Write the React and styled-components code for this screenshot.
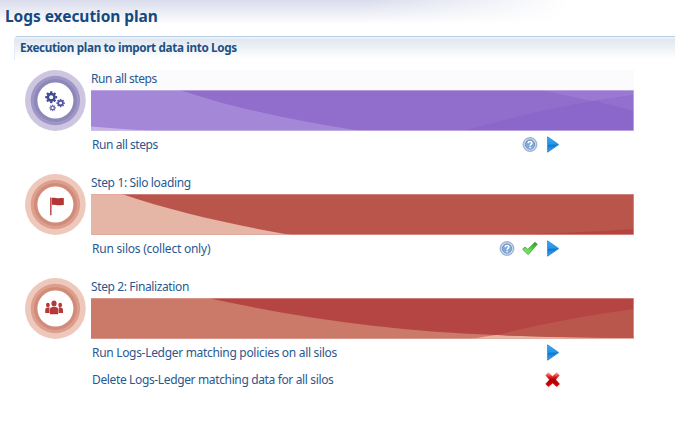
import React from 'react';
import styled, { createGlobalStyle } from 'styled-components';

const Global = createGlobalStyle`
  * { box-sizing: border-box; }
  body { margin: 0; background: #fff; overflow: hidden; }
`;

const Page = styled.main`
  width: 675px;
  height: 428px;
  overflow: hidden;
  color: #2a588f;
  font-family: "Noto Sans", "Open Sans", sans-serif;
  font-size: 12px;
  white-space: nowrap;
  background: #fff;
`;

const Header = styled.header`
  height: 36px;
  padding-left: 5px;
  background:
    linear-gradient(to bottom, rgba(255, 255, 255, 0), #fff 24px),
    linear-gradient(to right, #d9dcec 0, #d9dcec 365px, #fff 568px);
`;

const Title = styled.h1`
  margin: 0;
  font-size: 15.5px;
  line-height: 32px;
  font-weight: 700;
  letter-spacing: ${(p) => p.$spacing}px;
  color: #164981;
`;

const Panel = styled.section`
  margin-left: 14px;
`;

const PanelHeading = styled.h2`
  margin: 0;
  height: 24px;
  padding-left: 5px;
  border-top: 1px solid #b9cfe4;
  border-left: 1px solid #e3ecf4;
  border-top-left-radius: 4px;
  background: linear-gradient(to bottom, #ebf1f7 0, #ebf1f7 2px, #dfe7f0 2px, #fff 22px);
  font-size: 11.7px;
  line-height: 21px;
  font-weight: 700;
  letter-spacing: ${(p) => p.$spacing}px;
  color: #1e5085;
`;

const Steps = styled.div`
  display: flex;
  flex-direction: column;
  gap: 12px;
  padding: 10px 0 0 11px;
`;

const Step = styled.article`
  display: grid;
  grid-template-columns: 61px 543px;
  column-gap: 5px;
  min-height: 92px;
`;

const StepLabel = styled.div`
  height: 20px;
  line-height: 18px;
  background: ${(p) => (p.$tinted ? '#fbfbfd' : 'transparent')};
`;

const BannerArt = styled.svg`
  display: block;
  width: 543px;
  height: 41px;
`;

const Badge = styled.svg`
  display: block;
  width: 61px;
  height: 61px;
`;

const ActionRow = styled.div`
  display: flex;
  align-items: center;
  height: 27px;
  padding-left: 1px;
  padding-right: 69px;
`;

const Label = styled.span`
  letter-spacing: ${(p) => p.$spacing || 0}px;
`;

const ActionLabel = styled(Label)`
  padding-bottom: 1px;
`;

const Actions = styled.div`
  display: flex;
  margin-left: auto;
`;

const IconButton = styled.button`
  display: flex;
  align-items: center;
  justify-content: center;
  width: 23px;
  height: 23px;
  padding: 0;
  border: 0;
  background: none;
`;

const Glyph = styled.svg`
  display: block;
  width: 17px;
  height: 17px;
`;

function HelpIcon() {
  return (
    <Glyph viewBox="0 0 17 17">
      <defs>
        <linearGradient id="help" x1="0" y1="0" x2="0" y2="1">
          <stop offset="0" stopColor="#7f9ccb" />
          <stop offset="1" stopColor="#7fb2df" />
        </linearGradient>
      </defs>
      <circle cx="8" cy="8.5" r="7" fill="#a9bddb" stroke="#91aad0" strokeWidth=".8" />
      <circle cx="8" cy="8.5" r="5.9" fill="#d3e0ef" />
      <circle cx="8" cy="8.5" r="4.7" fill="url(#help)" stroke="#6c8fc2" strokeWidth=".8" />
      <path d="M6.2 7.2C6.2 4.9 10 5 9.9 7.1C9.8 8.4 8.1 8.4 8.1 9.8M8.1 10.8v1.4" fill="none" stroke="#fff" strokeWidth="1.5" />
    </Glyph>
  );
}

function PlayIcon() {
  return (
    <Glyph viewBox="0 0 17 17">
      <defs>
        <linearGradient id="play" x1="0" y1="0" x2="0" y2="1">
          <stop offset="0" stopColor="#43a8ee" />
          <stop offset=".48" stopColor="#1b98ef" />
          <stop offset=".55" stopColor="#1474cd" />
          <stop offset="1" stopColor="#42adf1" />
        </linearGradient>
      </defs>
      <path d="M2.6 .8L13.7 8.6L2.6 16.2Z" fill="url(#play)" stroke="#3788cf" strokeWidth=".9" strokeLinejoin="round" />
    </Glyph>
  );
}

function CheckIcon() {
  return (
    <Glyph viewBox="0 0 17 17">
      <defs>
        <linearGradient id="check" x1="0" y1="1" x2="1" y2="0">
          <stop offset="0" stopColor="#8df078" />
          <stop offset=".5" stopColor="#56d847" />
          <stop offset="1" stopColor="#2a9a24" />
        </linearGradient>
      </defs>
      <path d="M.6 9.3L3 7.1L5.8 9.4L12.9 2.3L15.3 4.2L6.2 14.6Z" fill="url(#check)" stroke="#3f9a37" strokeWidth=".8" strokeLinejoin="round" />
    </Glyph>
  );
}

function DeleteIcon() {
  return (
    <Glyph viewBox="0 0 17 17">
      <defs>
        <linearGradient id="delete" x1="0" y1="0" x2="0" y2="1">
          <stop offset="0" stopColor="#f8a0a0" />
          <stop offset=".25" stopColor="#ef2727" />
          <stop offset=".5" stopColor="#a90000" />
          <stop offset="1" stopColor="#e70000" />
        </linearGradient>
      </defs>
      <path d="M3.4 1.9L7.5 5.4L11.6 1.9L14.3 4.3L10.8 8.7L14.6 12.9L11.8 15.7L7.6 12.2L3.4 15.8L.6 13.1L4.4 8.7L.8 4.3Z" fill="url(#delete)" stroke="#cb1717" strokeOpacity=".7" strokeWidth=".6" strokeLinejoin="round" />
    </Glyph>
  );
}

const icons = { help: HelpIcon, play: PlayIcon, check: CheckIcon, delete: DeleteIcon };

function Gear({ x, y, r, color }) {
  return (
    <g transform={`translate(${x} ${y})`} fill="none" stroke={color}>
      <circle r={r * 0.62} strokeWidth={r * 0.46} />
      {[0, 45, 90, 135, 180, 225, 270, 315].map((a) => (
        <path key={a} d={`M0 ${-r * 0.76}V${-r * 1.12}`} strokeWidth={r * 0.44} transform={`rotate(${a})`} />
      ))}
    </g>
  );
}

function GearsArt() {
  return (
    <>
      <Gear x={26.2} y={27.2} r={5.3} color="#404c91" />
      <Gear x={35.6} y={33.1} r={3.7} color="#51549a" />
      <Gear x={27.6} y={37.9} r={2.9} color="#6364a5" />
    </>
  );
}

function FlagArt() {
  return (
    <g fill="#b53434">
      <path d="M25 23.4h1.6v17.8H25z" fill="#bd5555" />
      <path d="M26.8 23.9c2.6-.7 4.5.5 7 .4 2-.1 3.4-.4 5-.2v7c-2.4-.3-3.6.3-6 .2-2.3-.1-3.8-.8-6-.2Z" />
    </g>
  );
}

function PeopleArt() {
  return (
    <g fill="#b63939">
      <ellipse cx="22.9" cy="27" rx="1.9" ry="2.3" />
      <ellipse cx="35.2" cy="27" rx="1.9" ry="2.3" />
      <ellipse cx="29" cy="25.5" rx="2.6" ry="3" />
      <path d="M20.2 35v-3.1c0-1.9 1.2-2.7 3.9-2.7l.4.5V35zM38 35v-3.1c0-1.9-1.2-2.7-3.9-2.7l-.4.5V35zM24.9 36.3v-4.7c0-1.6 1.2-2.6 2.6-2.6h3.1c1.4 0 2.6 1 2.6 2.6v4.7z" />
    </g>
  );
}

function StepBadge({ id, rings, children }) {
  return (
    <Badge viewBox="0 0 61 61">
      <defs>
        <radialGradient id={id} gradientUnits="userSpaceOnUse" cx="30.4" cy="30.5" r="22">
          <stop offset=".8" stopColor={rings[2]} />
          <stop offset=".95" stopColor={rings[2]} />
          <stop offset="1" stopColor={rings[1]} />
        </radialGradient>
      </defs>
      <circle cx="30.4" cy="30.5" r="30.4" fill={rings[0]} />
      <circle cx="30.4" cy="30.5" r="24.7" fill={rings[1]} />
      <circle cx="30.4" cy="30.5" r="22" fill={`url(#${id})`} />
      <circle cx="30.4" cy="30.5" r="18" fill="#fff" />
      {children}
    </Badge>
  );
}

const steps = [
  {
    id: 'all',
    title: 'Run all steps',
    spacing: -0.43,
    tinted: true,
    rings: ['#cec6e0', '#9e97c5', '#8e87ba'],
    art: GearsArt,
    base: '#a587d7',
    edge: '#d3c3eb',
    shapes: [
      ['M89 0C141 18 206 31 270 41H543V0Z', '#916dcc'],
      ['M0 36.5Q30 39 60 41H0Z', '#c7b3e6'],
      ['M450 0H543V20Z', '#9b78d2'],
      ['M374 41Q452 17 543 5V41Z', '#8c67cb'],
      ['M505 11L543 21V5Z', '#9470ce'],
    ],
    rows: [{ text: 'Run all steps', spacing: -0.43, actions: ['help', 'play'] }],
  },
  {
    id: 'loading',
    title: 'Step 1: Silo loading',
    spacing: -0.36,
    rings: ['#efc8bc', '#dd9e8d', '#d18b79'],
    art: FlagArt,
    base: '#e5b5a5',
    edge: '#dea39d',
    shapes: [
      ['M31 0C83 18 143 31 200 41H543V0Z', '#ba554b'],
      ['M413 41Q490 38.5 543 35V41Z', '#b54441'],
    ],
    rows: [{ text: 'Run silos (collect only)', spacing: -0.23, actions: ['help', 'check', 'play'] }],
  },
  {
    id: 'finalization',
    title: 'Step 2: Finalization',
    spacing: -0.38,
    rings: ['#efc8bc', '#dd9e8d', '#d18b79'],
    art: PeopleArt,
    base: '#cb7968',
    edge: '#dfaca0',
    shapes: [
      ['M117 0C208 20 300 33 405 37Q460 40 543 40V0Z', '#b54542'],
      ['M380 41Q396 38 405 37Q450 39 543 40V41Z', '#e8b5a4'],
      ['M405 37Q475 20 543 11V40Q460 40 405 37Z', '#ba574c'],
    ],
    rows: [
      { text: 'Run Logs-Ledger matching policies on all silos', spacing: -0.31, actions: ['play'] },
      { text: 'Delete Logs-Ledger matching data for all silos', spacing: -0.36, actions: ['delete'] },
    ],
  },
];

function Banner({ base, edge, shapes }) {
  return (
    <BannerArt viewBox="0 0 543 41">
      <rect width="543" height="41" fill={base} />
      {shapes.map(([d, fill]) => <path key={d} d={d} fill={fill} />)}
      <path d="M0 .3H543M542.6 0V41M0 40.6H543" stroke={edge} strokeWidth=".7" fill="none" />
    </BannerArt>
  );
}

function ExecutionStep({ step }) {
  const Art = step.art;
  return (
    <Step>
      <StepBadge id={`ring-${step.id}`} rings={step.rings}><Art /></StepBadge>
      <div>
        <StepLabel $tinted={step.tinted}><Label $spacing={step.spacing}>{step.title}</Label></StepLabel>
        <Banner base={step.base} edge={step.edge} shapes={step.shapes} />
        {step.rows.map((row) => (
          <ActionRow key={row.text}>
            <ActionLabel $spacing={row.spacing}>{row.text}</ActionLabel>
            <Actions>
              {row.actions.map((name) => {
                const Icon = icons[name];
                return <IconButton key={name} aria-label={name}><Icon /></IconButton>;
              })}
            </Actions>
          </ActionRow>
        ))}
      </div>
    </Step>
  );
}

export default function App() {
  return (
    <Page>
      <Global />
      <Header><Title $spacing={-0.05}>Logs execution plan</Title></Header>
      <Panel>
        <PanelHeading $spacing={-0.34}>Execution plan to import data into Logs</PanelHeading>
        <Steps>{steps.map((step) => <ExecutionStep key={step.title} step={step} />)}</Steps>
      </Panel>
    </Page>
  );
}
